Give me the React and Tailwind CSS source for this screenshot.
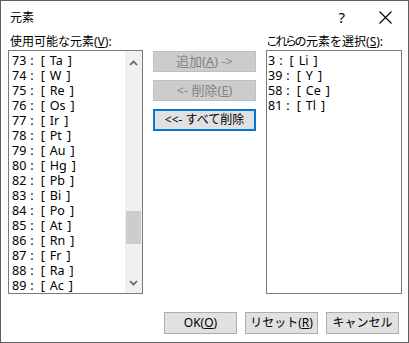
import React from "react";

const left = [["73","Ta"],["74","W"],["75","Re"],["76","Os"],["77","Ir"],["78","Pt"],["79","Au"],["80","Hg"],["82","Pb"],["83","Bi"],["84","Po"],["85","At"],["86","Rn"],["87","Fr"],["88","Ra"],["89","Ac"]];
const right = [["3","Li"],["39","Y"],["58","Ce"],["81","Tl"]];

const font = { fontFamily: '"Noto Sans", "Noto Sans CJK JP", sans-serif' };

function Row({ n, s }) {
  return (
    <div className="h-[15px] flex items-center text-[12.5px]">
      <span>{n}</span>
      <span className="ml-[4px]">:</span>
      <span className="ml-[7px]">[</span>
      <span className="ml-[5px]">{s}</span>
      <span className="ml-[5px]">]</span>
    </div>
  );
}

export default function App() {
  return (
    <div className="w-[409px] h-[343px] bg-white border border-[#5f5f5f] flex flex-col text-[12px] text-black leading-none" style={font}>
      <div className="h-[33px] flex items-center pl-[9px] shrink-0">
        <span className="text-[12px]">元素</span>
        <span className="ml-auto text-[15px] mr-[34px]">?</span>
        <svg width="13" height="13" viewBox="0 0 13 13" className="mr-[16px]">
          <path d="M0.5 0.5 L12.5 12.5 M12.5 0.5 L0.5 12.5" stroke="#000" strokeWidth="1.1" fill="none" />
        </svg>
      </div>
      <div className="flex pl-[7px]">
        <div className="flex flex-col w-[135px]">
          <div className="h-[16px] pl-[2px] flex items-center">使用可能な元素(<u>V</u>):</div>
          <div className="h-[244px] border border-[#7a7a7a] flex">
            <div className="flex-1 pt-[3px] pl-[3px]">
              {left.map(([n, s]) => (
                <Row key={n} n={n} s={s} />
              ))}
            </div>
            <div className="w-[17px] bg-[#f0f0f0] flex flex-col items-center">
              <svg width="9" height="6" viewBox="0 0 9 6" className="mt-[9px]">
                <path d="M1 5 L4.5 1.5 L8 5" stroke="#606060" strokeWidth="1.6" fill="none" />
              </svg>
              <div className="mt-[145px] w-[15px] h-[33px] bg-[#cdcdcd]"></div>
              <svg width="9" height="6" viewBox="0 0 9 6" className="mt-auto mb-[7px]">
                <path d="M1 1 L4.5 4.5 L8 1" stroke="#606060" strokeWidth="1.6" fill="none" />
              </svg>
            </div>
          </div>
        </div>
        <div className="flex flex-col w-[103px] ml-[10px] pt-[17px] gap-[8px]">
          <div className="h-[21px] bg-[#cccccc] border border-[#bfbfbf] text-[#838383] text-[13px] flex items-center justify-center">追加(<u>A</u>) -&gt;</div>
          <div className="h-[21px] bg-[#cccccc] border border-[#bfbfbf] text-[#838383] text-[13px] flex items-center justify-center">&lt;- 削除(<u>E</u>)</div>
          <div className="h-[22px] bg-[#e1e1e1] border-2 border-[#0078d7] flex items-center justify-center">&lt;&lt;- すべて削除</div>
        </div>
        <div className="flex flex-col w-[136px] ml-[10px]">
          <div className="h-[16px] flex items-center">
            <span className="tracking-[-2.5px]">これらの</span>
            <span className="ml-[2px]">元素</span>
            <span className="tracking-[-2px]">を</span>
            <span className="ml-[2px]">選択(<u>S</u>):</span>
          </div>
          <div className="h-[244px] border border-[#7a7a7a] pt-[3px] pl-[1px]">
            {right.map(([n, s]) => (
              <Row key={n} n={n} s={s} />
            ))}
          </div>
        </div>
      </div>
      <div className="flex justify-end gap-[8px] pr-[9px] mt-[18px]">
        <div className="w-[73px] h-[22px] bg-[#e1e1e1] border border-[#adadad] flex items-center justify-center">OK(<u>O</u>)</div>
        <div className="w-[73px] h-[22px] bg-[#e1e1e1] border border-[#adadad] flex items-center justify-center">リセット(<u>R</u>)</div>
        <div className="w-[73px] h-[22px] bg-[#e1e1e1] border border-[#adadad] flex items-center justify-center">キャンセル</div>
      </div>
    </div>
  );
}
